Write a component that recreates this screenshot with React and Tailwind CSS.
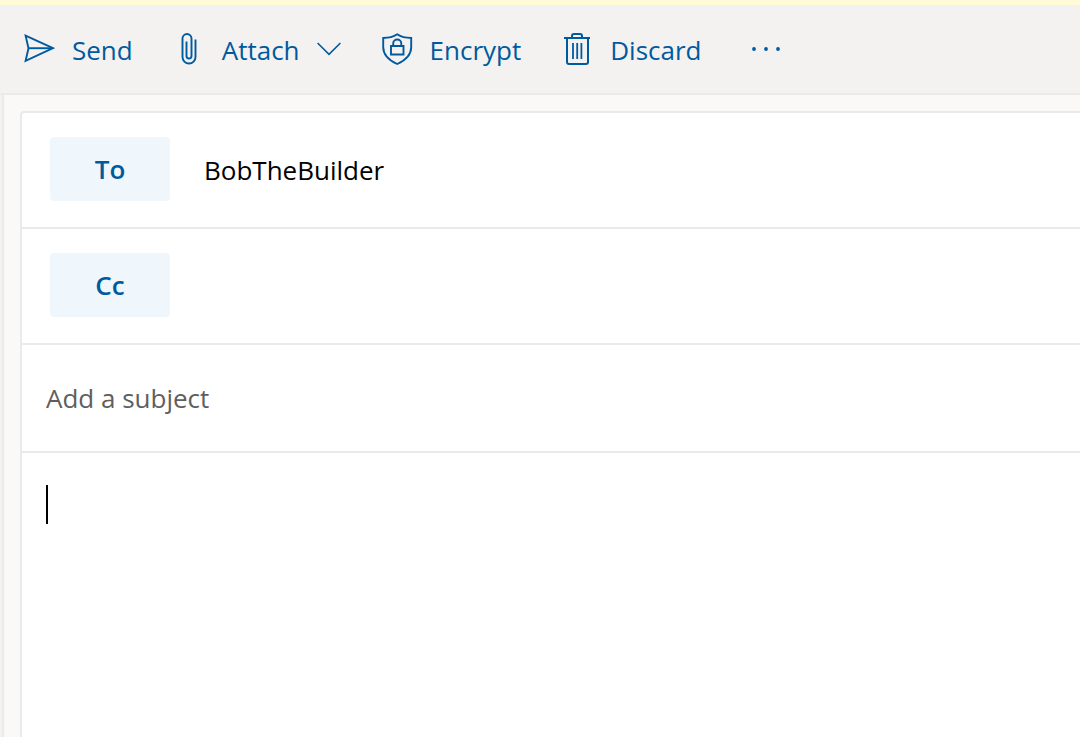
import React from "react";

const stroke = {
  viewBox: "0 0 32 32",
  fill: "none",
  stroke: "currentColor",
  strokeWidth: 2,
  "aria-hidden": true,
  className: "size-8 shrink-0",
};

function SendIcon() {
  return (
    <svg {...stroke} strokeWidth="1.9">
      <path d="M2.600 2.600 30 15.200 2.600 27.800 5.500 15.200Z" />
      <path d="M5.500 15.200H28" />
    </svg>
  );
}

function AttachIcon() {
  return (
    <svg {...stroke} strokeWidth="1.9">
      <path d="M22.500 6.500V24a6.500 6.500 0 0 1-13 0V5.500a4.500 4.500 0 0 1 9 0V23a2.500 2.500 0 0 1-5 0V8.500" />
    </svg>
  );
}

function EncryptIcon() {
  return (
    <svg {...stroke} strokeWidth="1.9">
      <path d="M16.200 1.300C12.200 4 7.500 5 2.200 5V14c0 7.500 5 13 14 17 9-4 14-9.500 14-17V5c-5.300 0-10-1-14-3.700Z" />
      <path d="M10 13h12.500v8.500H10Z" />
      <path d="M12.200 13v-2.500a4 4 0 0 1 8.100 0V13" />
    </svg>
  );
}

function DiscardIcon() {
  return (
    <svg {...stroke}>
      <path d="M3 5h26M11 5V3a2 2 0 0 1 2-2h6a2 2 0 0 1 2 2v2" />
      <path d="M6 5v24a2 2 0 0 0 2 2h17a2 2 0 0 0 2-2V5" />
      <path d="M12 10v16M16.200 10v16M20.400 10v16" strokeWidth="1.800" />
    </svg>
  );
}

function ChevronIcon() {
  return (
    <svg viewBox="0 0 24 14" fill="none" stroke="currentColor" strokeWidth="1.6" aria-hidden="true" className="h-[14px] w-6 shrink-0">
      <path d="M.6 1 12 12.300 23.400 1" />
    </svg>
  );
}

function MoreIcon() {
  return (
    <svg viewBox="0 0 32 32" fill="currentColor" aria-hidden="true" className="size-8">
      <circle cx="4" cy="16" r="1.900" />
      <circle cx="16" cy="16" r="1.900" />
      <circle cx="28" cy="16" r="1.900" />
    </svg>
  );
}

function Command({ icon, label, menu }) {
  return (
    <button type="button" className="flex items-center gap-[17px]" aria-haspopup={menu ? "menu" : undefined}>
      {icon}
      <span className="pt-[2px]">{label}</span>
      {menu && <ChevronIcon />}
    </button>
  );
}

function Recipients({ id, label, value }) {
  return (
    <div className="flex items-center gap-[34px] border-b-2 border-[#eaeaea] px-7 pt-6 pb-[26px]">
      <button type="button" id={id} className="h-16 w-[120px] shrink-0 rounded bg-[#eff6fc] font-semibold text-[#005a9e]">
        {label}
      </button>
      <input
        type="text"
        aria-labelledby={id}
        defaultValue={value}
        className="h-16 min-w-0 flex-1 bg-transparent pt-[2px] text-black outline-none"
      />
    </div>
  );
}

export default function App() {
  return (
    <div className="flex min-h-screen flex-col bg-[#f3f2f1] font-['Open_Sans','Noto_Sans',sans-serif] text-[26px] leading-9">
      <header className="border-b-2 border-t-[5px] border-t-[#fffbd6] border-b-[#eaeaea]">
        <div role="toolbar" aria-label="Message actions" className="flex h-[88px] items-center gap-10 pl-[23px] text-[#005a9e]">
          <Command icon={<SendIcon />} label="Send" />
          <Command icon={<AttachIcon />} label="Attach" menu />
          <Command icon={<EncryptIcon />} label="Encrypt" />
          <Command icon={<DiscardIcon />} label="Discard" />
          <button type="button" aria-label="More actions" className="ml-2">
            <MoreIcon />
          </button>
        </div>
      </header>
      <main className="ml-[2px] flex flex-1 flex-col border-l-2 border-[#eaeaea] bg-[#faf9f8] pt-4 pl-4">
        <form className="flex flex-1 flex-col rounded-tl border-t-2 border-l-2 border-[#eaeaea] bg-white">
          <Recipients id="to" label="To" value="BobTheBuilder" />
          <Recipients id="cc" label="Cc" value="" />
          <input
            type="text"
            aria-label="Add a subject"
            placeholder="Add a subject"
            className="h-[108px] w-full border-b-2 border-[#eaeaea] bg-transparent px-6 outline-none placeholder:text-[#605e5c] placeholder:opacity-100"
          />
          <div className="relative flex flex-1 px-6 pt-8">
            <span aria-hidden="true" className="absolute top-8 left-6 h-[39px] w-[2px] bg-black" />
            <textarea aria-label="Message body" className="flex-1 resize-none bg-transparent caret-transparent outline-none" />
          </div>
        </form>
      </main>
    </div>
  );
}
